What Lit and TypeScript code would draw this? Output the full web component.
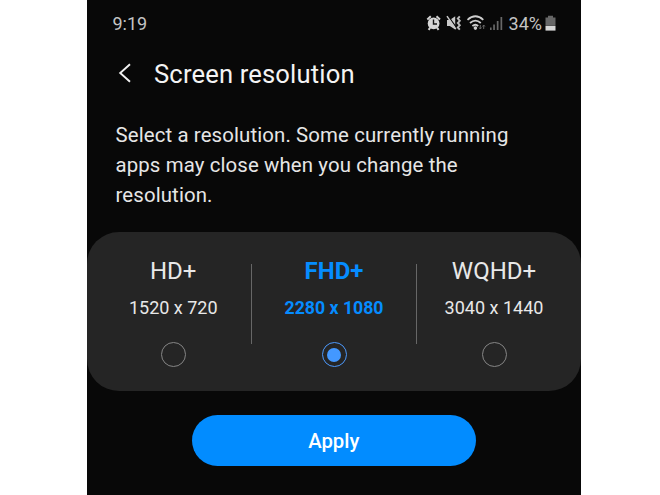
import { LitElement, html, css, svg } from "lit";
import { customElement, property, state } from "lit/decorators.js";
import { classMap } from "lit/directives/class-map.js";

interface Resolution {
  name: string;
  size: string;
}

const RESOLUTIONS: Resolution[] = [
  { name: "HD+", size: "1520 x 720" },
  { name: "FHD+", size: "2280 x 1080" },
  { name: "WQHD+", size: "3040 x 1440" },
];

@customElement("status-bar")
class StatusBar extends LitElement {
  static styles = css`
    :host {
      display: flex;
      justify-content: space-between;
      align-items: center;
      height: 24px;
      padding: 12px 24.6px 0 25.5px;
      color: #c4c4c4;
      font-size: 18px;
      line-height: 24px;
    }
    .indicators {
      display: flex;
      align-items: center;
    }
    .icons {
      display: block;
      width: 78px;
      height: 18px;
      margin-top: -2px;
    }
    .percent {
      margin-left: 5px;
    }
    .battery {
      display: block;
      width: 11px;
      height: 16px;
      margin: -2px 0 0 3px;
    }
  `;

  render() {
    return html`
      <span class="time">9:19</span>
      <div class="indicators">
        <svg class="icons" viewBox="426 14 78 18">
          ${svg`
            <circle cx="433.6" cy="23.4" r="5.9" fill="#d6d6d6"/>
            <g fill="none" stroke="#d2d2d2">
              <path d="M427.3 19.4 430.8 16.2M440 19.4 436.5 16.2" stroke-width="2"/>
              <path d="M430.2 27.6 428.6 29.8M437 27.6 438.6 29.8" stroke-width="2"/>
            </g>
            <path d="M433.5 19.6V24H437" fill="none" stroke="#141414" stroke-width="1.4"/>
            <path d="M447 20H449.8L455.2 16.2V29.6L449.8 26H447Z" fill="#c8c8c8"/>
            <path d="M447.8 15.6 456.6 27.8" stroke="#0a0a0a" stroke-width="1.3"/>
            <path d="M447 16.2 455.8 29.2" stroke="#c8c8c8" stroke-width="1.5"/>
            <path d="M459.8 16.4 457.8 18.6 459.8 20.8 457.8 23 459.8 25.2 457.8 27.4 459.8 29.6"
              fill="none" stroke="#bcbcbc" stroke-width="1.9"/>
            <g fill="none" stroke="#cecece" stroke-width="1.8">
              <path d="M467.5 19.8Q475.4 12.8 483.3 19.8"/>
              <path d="M470 23Q475.4 18.2 480.8 23"/>
              <path d="M472.4 26Q475.4 23.4 478.2 26"/>
            </g>
            <circle cx="475.4" cy="28.1" r="1.8" fill="#cecece"/>
            <path d="M480.3 25V29M479.1 27.5 480.3 29 481.5 27.5M483.7 29V25M482.5 26.5 483.7 25 484.9 26.5"
              fill="none" stroke="#686868"/>
            <g fill="#686868">
              <path d="M490 27.5H491.6V30H490ZM493.2 24.6H494.9V30H493.2ZM496.8 21H498.5V30H496.8ZM500.5 17H502.2V30H500.5Z"/>
            </g>
          `}
        </svg>
        <span class="percent">34%</span>
        <svg class="battery" viewBox="0 0 11 16">
          <path d="M3 .8H8V2.6H10.5V10.5H.5V2.6H3Z" fill="#666" />
          <path d="M.5 10.8H10.5V15.6H.5Z" fill="#d6d6d6" />
        </svg>
      </div>
    `;
  }
}

@customElement("resolution-option")
class ResolutionOption extends LitElement {
  @property() name = "";
  @property() size = "";
  @property({ type: Boolean }) selected = false;

  static styles = css`
    :host {
      display: block;
      text-align: center;
      cursor: pointer;
    }
    .option {
      display: flex;
      flex-direction: column;
      align-items: center;
      color: #e8e8e8;
    }
    .name {
      margin-top: 24px;
      font-size: 24px;
      line-height: 30px;
    }
    .size {
      margin-top: 10.3px;
      font-size: 18px;
      line-height: 24px;
      white-space: nowrap;
    }
    .radio {
      box-sizing: border-box;
      display: flex;
      align-items: center;
      justify-content: center;
      width: 25px;
      height: 25px;
      margin-top: 22px;
      border: 1px solid #858585;
      border-radius: 50%;
    }
    .selected {
      color: #058cff;
      font-weight: 700;
    }
    .selected .size {
      font-size: 17.7px;
    }
    .selected .radio {
      border-color: #4c98fb;
    }
    .selected .radio::before {
      content: "";
      width: 14px;
      height: 14px;
      border-radius: 50%;
      background: #4398ff;
    }
  `;

  render() {
    return html`
      <div class=${classMap({ option: true, selected: this.selected })}>
        <span class="name">${this.name}</span>
        <span class="size">${this.size}</span>
        <span class="radio"></span>
      </div>
    `;
  }
}

@customElement("app-root")
class AppRoot extends LitElement {
  @state() private current = "FHD+";

  static styles = css`
    :host {
      display: flex;
      width: 660px;
      height: 495px;
      overflow: hidden;
      background: #fff;
      font-family: Roboto, sans-serif;
    }
    .phone {
      display: flex;
      flex-direction: column;
      width: 493.6px;
      margin-left: 87px;
      background: #080808;
    }
    .title-bar {
      display: flex;
      align-items: center;
      height: 30px;
      margin-top: 23px;
      padding-left: 31px;
    }
    .back {
      display: block;
      width: 14px;
      height: 20px;
      margin-top: -2px;
    }
    h1 {
      margin: 0 0 0 22px;
      color: #f4f4f4;
      font-size: 25.6px;
      font-weight: 400;
      letter-spacing: 0.15px;
      line-height: 30px;
    }
    .description {
      width: 420px;
      margin: 32.4px 0 0 28.5px;
      color: #e6e6e6;
      font-size: 20.4px;
      letter-spacing: 0.12px;
      line-height: 29.8px;
    }
    .card {
      box-sizing: border-box;
      display: grid;
      grid-template-columns: 155.5px 1px 164px 1px 154px;
      height: 159px;
      margin-top: 21.2px;
      padding: 0 8.5px;
      border-radius: 32px;
      background: #252525;
    }
    .divider {
      height: 80px;
      margin-top: 32px;
      background: #676767;
    }
    .apply {
      align-self: center;
      width: 284px;
      height: 50.5px;
      margin: 24.4px 0 0;
      padding: 0;
      border: 0;
      border-radius: 26px;
      background: #028cff;
      color: #fff;
      font: 500 20.3px/50px Roboto, sans-serif;
    }
  `;

  render() {
    return html`
      <main class="phone">
        <status-bar></status-bar>
        <header class="title-bar">
          <svg class="back" viewBox="0 0 14 20">
            <path d="M12 1.2 2.2 10 12 18.8" fill="none" stroke="#f0f0f0" stroke-width="1.9" />
          </svg>
          <h1>Screen resolution</h1>
        </header>
        <p class="description">
          Select a resolution. Some currently running<br />apps may close when you change the<br />resolution.
        </p>
        <section class="card">
          ${RESOLUTIONS.map(
            (r, i) => html`
              ${i > 0 ? html`<div class="divider"></div>` : null}
              <resolution-option
                .name=${r.name}
                .size=${r.size}
                .selected=${r.name === this.current}
                @click=${() => (this.current = r.name)}
              ></resolution-option>
            `
          )}
        </section>
        <button class="apply">Apply</button>
      </main>
    `;
  }
}
